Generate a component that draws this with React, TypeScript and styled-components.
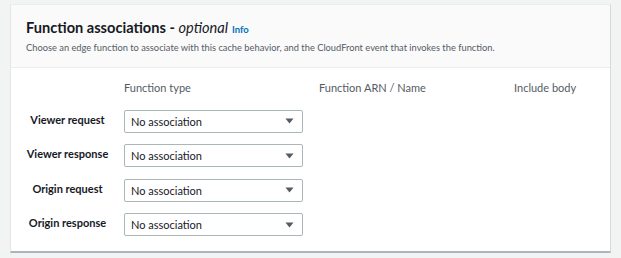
import styled, { createGlobalStyle } from 'styled-components';

const GlobalStyle = createGlobalStyle`
	html, body {
		margin: 0;
		padding: 0;
		background: #f2f3f3;
		font-family: Lato, 'Open Sans', Arial, sans-serif;
	}
`;

const Page = styled.div`
	width: 621px;
	height: 258px;
	padding: 4px 10px 0 10px;
	box-sizing: border-box;
`;

const Card = styled.section`
	background: #ffffff;
	border-left: 1px solid #e4e6e6;
	border-right: 1px solid #d5dbdb;
	border-bottom: 2px solid #aab7b8;
	border-top: 1px solid #eaeded;
	height: 249px;
	box-sizing: border-box;
	overflow: hidden;
`;

const Header = styled.header`
	background: #fafafa;
	border-bottom: 1px solid #eaeded;
	padding: 13px 15px 0 15px;
	height: 63px;
	box-sizing: border-box;
`;

const Title = styled.h2`
	margin: 0;
	font-size: 14.6px;
	font-weight: 700;
	color: #16191f;
	line-height: 20px;
	display: flex;
	align-items: baseline;
	gap: 4px;
`;

const Optional = styled.em`
	font-weight: 400;
	font-style: italic;
`;

const InfoLink = styled.span`
	font-size: 9.5px;
	font-weight: 700;
	color: #0073bb;
`;

const Description = styled.p`
	margin: 2px 0 0 0;
	font-size: 9.3px;
	color: #545b64;
	line-height: 12px;
`;

const Body = styled.div`
	display: grid;
	grid-template-columns: 113px 195px 195px 195px;
	grid-template-rows: 22px repeat(4, 34.6px);
	padding-top: 8px;
	align-items: end;
`;

const ColumnHeading = styled.div`
	font-size: 11px;
	color: #545b64;
	white-space: nowrap;
	align-self: center;
`;

const RowLabel = styled.div`
	font-size: 11px;
	font-weight: 700;
	color: #16191f;
	text-align: center;
	line-height: 16px;
	padding-bottom: 5px;
	white-space: nowrap;
`;

const Select = styled.div`
	width: 179px;
	height: 23px;
	box-sizing: border-box;
	border: 1px solid #aab7b8;
	border-radius: 2px;
	background: #ffffff;
	display: flex;
	align-items: center;
	justify-content: space-between;
	padding: 0 8px 0 6px;
	font-size: 11px;
	color: #16191f;
`;

const Caret = () => (
	<svg width="9" height="6" viewBox="0 0 9 6">
		<path d="M0.5 0.5 L8.5 0.5 L4.5 5.5 Z" fill="#545b64" />
	</svg>
);

const rows = ['Viewer request', 'Viewer response', 'Origin request', 'Origin response'];

const App = () => (
	<Page>
		<GlobalStyle />
		<Card>
			<Header>
				<Title>
					<span>
						Function associations - <Optional>optional</Optional>
					</span>
					<InfoLink>Info</InfoLink>
				</Title>
				<Description>
					Choose an edge function to associate with this cache behavior, and the CloudFront
					event that invokes the function.
				</Description>
			</Header>
			<Body>
				<span />
				<ColumnHeading>Function type</ColumnHeading>
				<ColumnHeading>Function ARN / Name</ColumnHeading>
				<ColumnHeading>Include body</ColumnHeading>
				{rows.map((row) => (
					<>
						<RowLabel key={row}>{row}</RowLabel>
						<Select>
							<span>No association</span>
							<Caret />
						</Select>
						<span />
						<span />
					</>
				))}
			</Body>
		</Card>
	</Page>
);

export default App;
